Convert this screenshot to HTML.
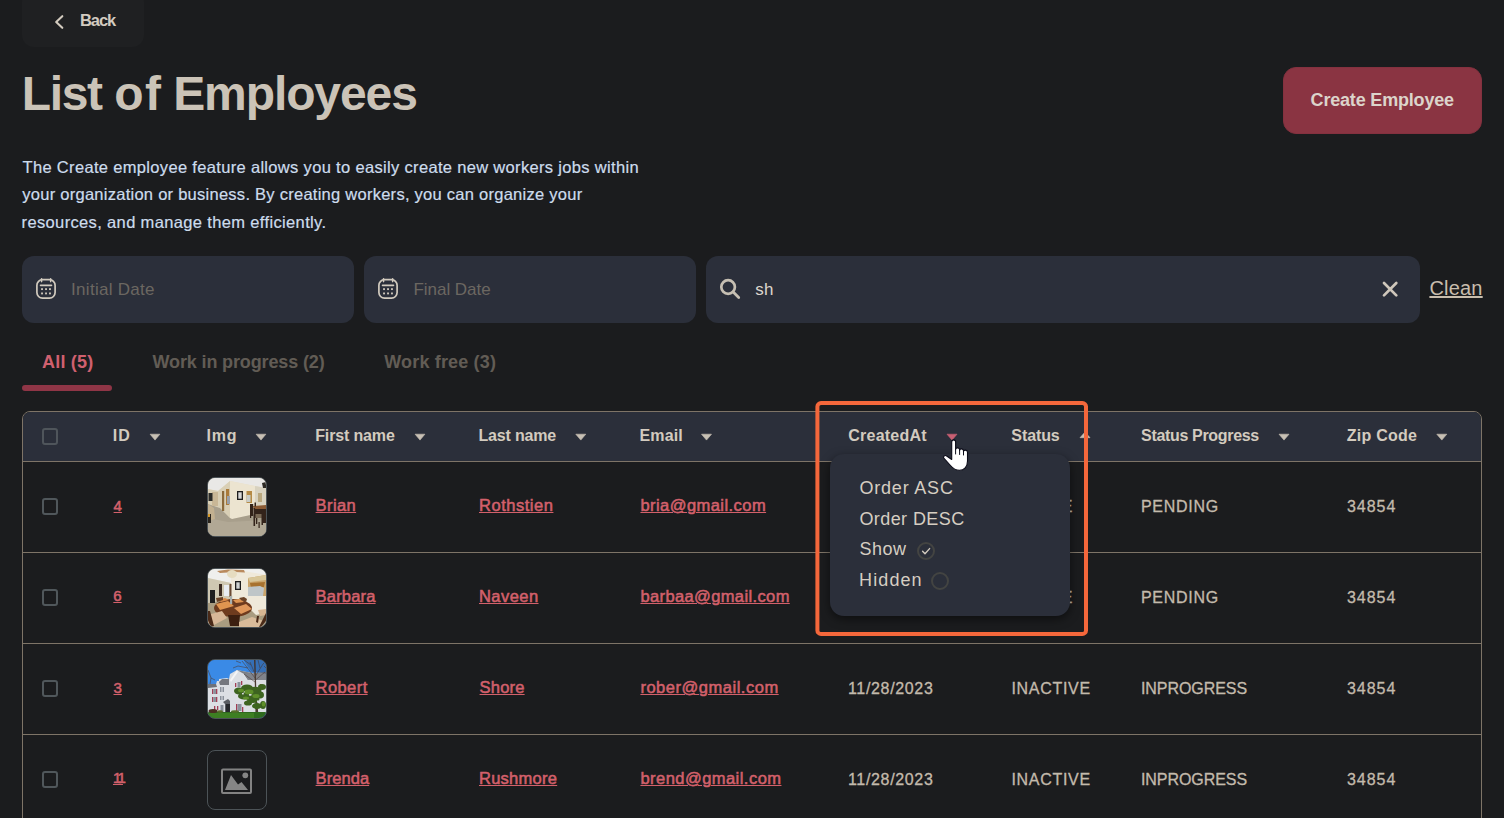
<!DOCTYPE html>
<html lang="en">
<head>
<meta charset="utf-8">
<title>List of Employees</title>
<style>
*{box-sizing:border-box;margin:0;padding:0}
html,body{width:1504px;height:818px;overflow:hidden;background:#1b1c1e}
body{position:relative;font-family:"Liberation Sans",sans-serif;color:#d3cbbf}
.a,.t,svg.a{position:absolute}
.t{white-space:nowrap;line-height:1}
.inp{top:256px;height:67px;border-radius:12px;background:#2b2f3a}
.hline{left:23px;width:1458px;height:1px;background:#7e7467}
.cb{left:42px;width:16px;height:17px;border:2px solid #50575b;border-radius:3px}
.pic{left:207px;width:60px;height:60px;border-radius:8px;border:1px solid #4c5357;overflow:hidden;background:#1b1c1e}
.rad{width:18px;height:18px;border-radius:50%;border:2px solid #434442}
</style>
</head>
<body>

<div class="a" style="left:22px;top:-10px;width:122px;height:57px;border-radius:12px;background:#1f2022"></div>
<svg class="a" style="left:50px;top:10px" width="20" height="24" viewBox="50 10 20 24"><path d="M62.3 16.2 L56.2 22 L62.3 27.8" fill="none" stroke="#d3cbbf" stroke-width="2.1" stroke-linecap="round" stroke-linejoin="round"/></svg>
<div class="a" style="left:1283px;top:67px;width:199px;height:67px;border-radius:13px;background:#8a3442;border:1px solid #84313f"></div>
<div class="a inp" style="left:22px;width:332px"></div>
<div class="a inp" style="left:364px;width:332px"></div>
<div class="a inp" style="left:706px;width:714px"></div>
<svg class="a" style="left:34.9px;top:276px" width="24" height="26" viewBox="0 0 24 26"><rect x="1.9" y="3.7" width="18.2" height="18.45" rx="5.6" fill="none" stroke="#d1cabe" stroke-width="1.7"/><path d="M6.55 2.9V5.6 M15.65 2.9V5.6" stroke="#d1cabe" stroke-width="1.6" stroke-linecap="round"/><path d="M5.6 9.3H16.4" stroke="#d1cabe" stroke-width="1.8" stroke-linecap="round"/><g fill="#d1cabe"><rect x="6.1" y="12.2" width="1.85" height="1.85"/><rect x="10.1" y="12.2" width="1.85" height="1.85"/><rect x="14.05" y="12.2" width="1.85" height="1.85"/><rect x="6.1" y="16.5" width="1.85" height="1.85"/><rect x="10.1" y="16.5" width="1.85" height="1.85"/><rect x="14.05" y="16.5" width="1.85" height="1.85"/></g></svg>
<svg class="a" style="left:377px;top:276px" width="24" height="26" viewBox="0 0 24 26"><rect x="1.9" y="3.7" width="18.2" height="18.45" rx="5.6" fill="none" stroke="#d1cabe" stroke-width="1.7"/><path d="M6.55 2.9V5.6 M15.65 2.9V5.6" stroke="#d1cabe" stroke-width="1.6" stroke-linecap="round"/><path d="M5.6 9.3H16.4" stroke="#d1cabe" stroke-width="1.8" stroke-linecap="round"/><g fill="#d1cabe"><rect x="6.1" y="12.2" width="1.85" height="1.85"/><rect x="10.1" y="12.2" width="1.85" height="1.85"/><rect x="14.05" y="12.2" width="1.85" height="1.85"/><rect x="6.1" y="16.5" width="1.85" height="1.85"/><rect x="10.1" y="16.5" width="1.85" height="1.85"/><rect x="14.05" y="16.5" width="1.85" height="1.85"/></g></svg>
<svg class="a" style="left:716px;top:275px" width="28" height="28" viewBox="716 275 28 28"><circle cx="728.1" cy="287" r="6.8" fill="none" stroke="#c6bfb2" stroke-width="2.7"/><path d="M733.2 292.1 L738.7 297.5" stroke="#c6bfb2" stroke-width="2.8" stroke-linecap="round"/></svg>
<svg class="a" style="left:1380px;top:279px" width="20" height="20" viewBox="1380 279 20 20"><path d="M1384 283 L1396.3 295.4 M1396.3 283 L1384 295.4" stroke="#cfc7bb" stroke-width="2.7" stroke-linecap="round"/></svg>
<div class="a" style="left:22px;top:385px;width:90px;height:6px;border-radius:3px;background:#8f3546"></div>
<div class="a" style="left:22px;top:411px;width:1460px;height:430px;border:1px solid #7e7467;border-radius:8px 8px 0 0"></div>
<div class="a" style="left:23px;top:412px;width:1458px;height:49px;background:#2b2f3a;border-radius:7px 7px 0 0"></div>
<div class="a hline" style="top:461px"></div>
<div class="a hline" style="top:552px"></div>
<div class="a hline" style="top:643px"></div>
<div class="a hline" style="top:734px"></div>
<svg class="a" style="left:0;top:428px" width="1504" height="16" viewBox="0 428 1504 16">
<polygon points="150.1,434.2 159.9,434.2 155.0,440.1" fill="#c7c0b4" stroke="#c7c0b4" stroke-width="0.6" stroke-linejoin="round"/>
<polygon points="256.1,434.2 265.9,434.2 261.0,440.1" fill="#c7c0b4" stroke="#c7c0b4" stroke-width="0.6" stroke-linejoin="round"/>
<polygon points="415.1,434.2 424.9,434.2 420.0,440.1" fill="#c7c0b4" stroke="#c7c0b4" stroke-width="0.6" stroke-linejoin="round"/>
<polygon points="575.8,434.2 585.8,434.2 580.8,440.1" fill="#c7c0b4" stroke="#c7c0b4" stroke-width="0.6" stroke-linejoin="round"/>
<polygon points="701.5,434.2 711.5,434.2 706.5,440.1" fill="#c7c0b4" stroke="#c7c0b4" stroke-width="0.6" stroke-linejoin="round"/>
<polygon points="1279.0,434.2 1289.0,434.2 1284.0,440.1" fill="#c7c0b4" stroke="#c7c0b4" stroke-width="0.6" stroke-linejoin="round"/>
<polygon points="1436.8,434.2 1446.8,434.2 1441.8,440.1" fill="#c7c0b4" stroke="#c7c0b4" stroke-width="0.6" stroke-linejoin="round"/>
<polygon points="947.0,434.2 957.0,434.2 952.0,440.1" fill="#c96073" stroke="#c96073" stroke-width="0.6" stroke-linejoin="round"/>
<polygon points="1080.0,437.7 1090.0,437.7 1085.0,432.1" fill="#c7c0b4" stroke="#c7c0b4" stroke-width="0.6" stroke-linejoin="round"/>
</svg>
<div class="a cb" style="top:428px;border-color:#4f555b"></div>
<div class="a cb" style="top:498px"></div>
<div class="a cb" style="top:589px"></div>
<div class="a cb" style="top:680px"></div>
<div class="a cb" style="top:771px"></div>
<div class="a pic" style="top:477px"><svg width="58" height="58" viewBox="0 0 58 58">
<rect width="58" height="58" fill="#e6dfcc"/>
<polygon points="0,0 58,0 58,10 47,8 22,3 10,13 0,11" fill="#e9e8e6"/>
<polygon points="0,11 10,13 22,3 22,40 12,30 0,26" fill="#d9cfb5"/>
<polygon points="22,3 47,8 47,36 24,41 22,40" fill="#ece4d0"/>
<polygon points="47,8 58,10 58,30 47,30" fill="#d8d2c0"/>
<polygon points="0,26 12,30 22,40 24,41 47,36 58,34 58,58 0,58" fill="#a89f8c"/>
<polygon points="0,40 20,44 58,42 58,58 0,58" fill="#b1a895"/>
<rect x="4" y="14" width="6" height="14" fill="#c9b796"/>
<rect x="0.5" y="15" width="4" height="8" fill="#2a2a28"/>
<rect x="14" y="13" width="2.2" height="20" fill="#8a6a3c"/>
<rect x="18" y="11" width="3.2" height="16" fill="#a97a3a"/>
<rect x="19" y="18" width="3" height="8" fill="#9aa0a8"/>
<rect x="29" y="13" width="6" height="9" fill="#1e1e1e"/><rect x="30.3" y="14.3" width="3.4" height="6.4" fill="#d8d8d8"/>
<rect x="38.5" y="13" width="5.5" height="12" fill="#b58a45"/><rect x="38.5" y="17" width="4" height="7" fill="#c8ccc8"/>
<rect x="50" y="15" width="4" height="9" fill="#b9a77e"/>
<polygon points="54,5 58,4 58,10 55,10" fill="#2d2924"/>
<polygon points="45,28 58,27 58,31 46,32" fill="#8a5a34"/>
<g fill="#33231a"><rect x="42" y="26" width="3.2" height="12"/><rect x="42" y="26" width="1.2" height="14"/><rect x="45.5" y="30" width="1.6" height="18"/><rect x="47" y="31" width="7" height="9"/><rect x="48" y="40" width="1.3" height="6"/><rect x="53.5" y="31" width="1.5" height="16"/><rect x="55" y="31" width="3" height="14"/><rect x="50.5" y="44" width="1.2" height="6"/><rect x="46.5" y="24.5" width="1.5" height="4"/></g>
<polygon points="47.5,36 53.5,36 53.5,40 47.5,40" fill="#7a6a56"/>
<polygon points="0,26 6,30 7,41 0,43" fill="#c2b090"/>
<rect x="0" y="36" width="3" height="9" fill="#2a241c"/><rect x="0" y="36" width="2" height="3" fill="#d69a2a"/>
</svg></div>
<div class="a pic" style="top:568px"><svg width="58" height="58" viewBox="0 0 58 58">
<rect width="58" height="58" fill="#ece6d6"/>
<polygon points="0,0 58,0 58,6 36,4 23,14 0,9" fill="#efefed"/>
<polygon points="0,9 23,14 23,30 0,34" fill="#cfc8b2"/>
<polygon points="23,4 36,2 58,6 58,44 48,46 36,34 23,30" fill="#efe9da"/>
<polygon points="0,34 23,30 36,34 48,46 58,44 58,58 0,58" fill="#a99c80"/>
<polygon points="9,2 20,0.5 36,1 37,3.5 27,3 12,4" fill="#b98a5e"/>
<ellipse cx="24" cy="5" rx="5" ry="4" fill="#e6dcc0"/>
<rect x="11" y="15" width="3" height="12" fill="#3b2b22"/>
<rect x="16" y="16" width="5" height="11" fill="#e9edf2"/>
<rect x="21.5" y="15" width="2" height="13" fill="#6b4a34"/>
<rect x="2" y="21" width="5" height="13" fill="#1e1e1e"/>
<rect x="27" y="12" width="6" height="9" fill="#1d1d1d"/><rect x="28.3" y="13.3" width="3.4" height="6.4" fill="#cfd2d2"/>
<polygon points="40,9 58,6 58,27 40,27" fill="#caa56c"/>
<polygon points="40,9 58,6 58,11 42,13" fill="#d8c79a"/>
<polygon points="42,14 57,13 56,18 43,19" fill="#a8722f"/>
<polygon points="40,18 52,17 56,19 55,27 40,27" fill="#bfc6c8"/>
<ellipse cx="25" cy="39" rx="19" ry="9" fill="#6e3b1e"/>
<polygon points="8,35 20,32 26,37 12,41" fill="#e09550"/>
<polygon points="25,31 32,30 36,33 28,34" fill="#df9552"/>
<polygon points="26,39 38,35 44,40 33,45" fill="#e0975a"/>
<polygon points="10,31 17,29 21,31 13,33" fill="#d98a48"/>
<rect x="22" y="27" width="2.2" height="8" fill="#a9b0ae"/>
<polygon points="20,46 32,46 31,57 22,57" fill="#3c1f10"/>
<polygon points="0,46 14,42 19,49 6,56 0,54" fill="#d8b898"/>
<polygon points="0,42 2,42 6,57 3,58 0,52" fill="#4a2a18"/>
<polygon points="31,53 44,48 56,52 52,58 31,58" fill="#d9bb9a"/>
<polygon points="50,41 58,40 58,46 52,47" fill="#d6b592"/>
<polygon points="49,47 51,47 50,54 48,53" fill="#4a2a18"/><polygon points="55,50 58,44 58,52 53,58 51,58" fill="#4a2a18"/>
<polygon points="31,29 36,28 39,30 38,33 33,31" fill="#6a4226"/>
<polygon points="8,29 15,28 15,31 9,33" fill="#6a4226"/>
</svg></div>
<div class="a pic" style="top:659px"><svg width="58" height="58" viewBox="0 0 58 58">
<rect width="58" height="58" fill="#3f86dd"/>
<polygon points="0,0 58,0 58,12 40,10 20,22 0,22" fill="#3a8ae6"/>
<polygon points="0,24 8,24 9,21 11,21 11,19 19,18 21,19 22,14 29,10 44,13 58,16 58,53 0,53" fill="#dcdfe4"/>
<polygon points="29,10 36,14 40,20 44,19 44,13" fill="#7d8087"/>
<polygon points="36,14 58,12 58,20 40,20" fill="#80838a"/>
<polygon points="11,22 14,19 21,19 21,25 12,25" fill="#74777e"/>
<polygon points="0,24 8,24 9,27 0,28" fill="#6e7178"/>
<polygon points="22,20 29,10 30,12 23,22" fill="#f4f5f7"/>
<g fill="#a23e55"><rect x="4" y="29" width="1.3" height="5"/><rect x="8" y="29" width="1.3" height="5"/><rect x="4" y="37" width="1.3" height="5"/><rect x="8" y="37" width="1.3" height="5"/><rect x="6" y="46" width="1.3" height="4"/><rect x="9" y="46" width="1.3" height="4"/><rect x="27" y="23" width="1.3" height="4"/><rect x="33" y="21" width="1.3" height="4"/><rect x="28" y="44" width="1.3" height="7"/><rect x="34" y="47" width="1.3" height="5"/><rect x="52" y="24" width="1.3" height="5"/></g>
<g fill="#8b929c"><rect x="5.3" y="29" width="2.7" height="5"/><rect x="5.3" y="37" width="2.7" height="5"/><rect x="12" y="27" width="1.5" height="5"/><rect x="14.5" y="27" width="1.5" height="5"/><rect x="12" y="36" width="1.5" height="4"/><rect x="14.5" y="36" width="1.5" height="4"/><rect x="29.5" y="22" width="3" height="5"/><rect x="29.5" y="44" width="4" height="7"/><rect x="12.5" y="45" width="3" height="7"/></g>
<polygon points="15,42 20,39 22,41 22,52 17,52 17,44" fill="#5a5d63"/>
<rect x="18" y="44" width="4" height="8" fill="#26282c"/>
<path d="M46 0 L47.5 0 L48.3 30 L50.5 56 L47.5 56 L47 30 Z" fill="#4a3a30"/>
<g stroke="#4c3f3c" stroke-width="0.7" fill="none" opacity=".85"><path d="M47 18 L38 6 L34 1 M47 14 L42 2 M47.5 16 L55 4 L58 1 M47.5 20 L57 12 M40 8 L30 6 L25 8 M43 5 L36 0 M52 8 L50 0 M47 22 L36 14 M56 6 L58 8 M33 3 L28 1 M0 10 L3 18 L2 24 M3 18 L7 20"/></g>
<g fill="#3d6420"><ellipse cx="31" cy="31" rx="5" ry="3.4"/><ellipse cx="39" cy="28" rx="6" ry="3.6"/><ellipse cx="47" cy="31" rx="6.5" ry="4.2"/><ellipse cx="36" cy="36" rx="6" ry="3.6"/><ellipse cx="45" cy="39" rx="6.5" ry="4"/><ellipse cx="52" cy="35" rx="4" ry="3.4"/><ellipse cx="40" cy="43" rx="4" ry="2.6"/><ellipse cx="55" cy="45" rx="3" ry="4"/><ellipse cx="49" cy="46" rx="5" ry="3"/><ellipse cx="54" cy="27" rx="4" ry="3"/></g>
<g fill="#5f8f2a"><ellipse cx="33" cy="30.5" rx="3" ry="1.8"/><ellipse cx="41" cy="32" rx="4.5" ry="2.4"/><ellipse cx="48" cy="36" rx="3.6" ry="2"/><ellipse cx="38" cy="38" rx="3" ry="1.6"/><ellipse cx="55.5" cy="44" rx="1.8" ry="2.6"/></g>
<g fill="#d7dadf"><rect x="41" y="34" width="2.2" height="1.6"/><rect x="34" y="33" width="1.8" height="1.4"/><rect x="49" y="40.5" width="2" height="1.5"/></g>
<polygon points="36,0 58,0 58,14 50,12 44,12 40,7" fill="#2c2a3a" opacity=".28"/>
<polygon points="0,52 58,52 58,58 0,58" fill="#2f6a1e"/>
<polygon points="0,53 46,53 46,58 0,58" fill="#3d7f22"/>
<ellipse cx="5" cy="51" rx="4.5" ry="2" fill="#4a2f22"/><ellipse cx="12" cy="51.5" rx="3" ry="1.3" fill="#5a6a2a"/><ellipse cx="27" cy="51.5" rx="4" ry="1.3" fill="#55702a"/>
</svg></div>
<div class="a pic" style="top:750px"><svg width="58" height="58" viewBox="0 0 58 58">
<rect x="14" y="18.5" width="29" height="23.5" rx="1" fill="none" stroke="#838383" stroke-width="2"/>
<polygon points="17,39 23,24 30,33.5 33.5,31 40,39" fill="#858585"/>
<circle cx="37.3" cy="24.3" r="2.9" fill="#858585"/>
</svg></div>

<div class="t" id="t0" style="left:79.90px;top:12.00px;font-size:16.5px;font-weight:700;color:#d3cbc0;letter-spacing:-1.015px;">Back</div>
<div class="t" id="t1" style="left:21.80px;top:70.00px;font-size:48px;font-weight:700;color:#cbc3b7;letter-spacing:-1.365px;">List</div>
<div class="t" id="t2" style="left:114.30px;top:70.00px;font-size:48px;font-weight:700;color:#cbc3b7;letter-spacing:1.278px;">of</div>
<div class="t" id="t3" style="left:173.20px;top:70.00px;font-size:48px;font-weight:700;color:#cbc3b7;letter-spacing:-1.099px;">Employees</div>
<div class="t" id="t4" style="left:22.53px;top:159.00px;font-size:16.5px;font-weight:400;color:#cddced;letter-spacing:0.327px;-webkit-text-stroke:0.2px #cddced;">The Create employee feature allows you to easily create new workers jobs within</div>
<div class="t" id="t5" style="left:22.30px;top:186.00px;font-size:16.5px;font-weight:400;color:#cddced;letter-spacing:0.260px;-webkit-text-stroke:0.2px #cddced;">your organization or business. By creating workers, you can organize your</div>
<div class="t" id="t6" style="left:21.60px;top:214.00px;font-size:16.5px;font-weight:400;color:#cddced;letter-spacing:0.353px;-webkit-text-stroke:0.2px #cddced;">resources, and manage them efficiently.</div>
<div class="t" id="t7" style="left:1310.60px;top:91.00px;font-size:18px;font-weight:700;color:#dcd4cb;letter-spacing:-0.187px;">Create Employee</div>
<div class="t" id="t8" style="left:71.11px;top:281.00px;font-size:17px;font-weight:400;color:#6b6761;letter-spacing:0.286px;">Initial Date</div>
<div class="t" id="t9" style="left:413.51px;top:281.00px;font-size:17px;font-weight:400;color:#6b6761;letter-spacing:-0.034px;">Final Date</div>
<div class="t" id="t10" style="left:755.16px;top:281.00px;font-size:17px;font-weight:400;color:#ddd7cd;letter-spacing:0.338px;">sh</div>
<div class="t" id="t11" style="left:1429.40px;top:278.00px;font-size:20px;font-weight:400;color:#c8bdad;letter-spacing:0.206px;text-decoration:underline;text-decoration-thickness:2px;text-underline-offset:1px;">Clean</div>
<div class="t" id="t12" style="left:42.05px;top:353.00px;font-size:18px;font-weight:700;color:#d0606f;letter-spacing:0.183px;">All (5)</div>
<div class="t" id="t13" style="left:152.50px;top:353.00px;font-size:18px;font-weight:700;color:#625c55;letter-spacing:-0.132px;">Work in progress (2)</div>
<div class="t" id="t14" style="left:384.30px;top:353.00px;font-size:18px;font-weight:700;color:#625c55;letter-spacing:0.158px;">Work free (3)</div>
<div class="t" id="t15" style="left:112.75px;top:428.00px;font-size:16px;font-weight:700;color:#d3cbbf;letter-spacing:1.097px;">ID</div>
<div class="t" id="t16" style="left:206.50px;top:428.00px;font-size:16px;font-weight:700;color:#d3cbbf;letter-spacing:0.750px;">Img</div>
<div class="t" id="t17" style="left:315.25px;top:428.00px;font-size:16px;font-weight:700;color:#d3cbbf;letter-spacing:-0.151px;">First name</div>
<div class="t" id="t18" style="left:478.50px;top:428.00px;font-size:16px;font-weight:700;color:#d3cbbf;letter-spacing:-0.175px;">Last name</div>
<div class="t" id="t19" style="left:639.50px;top:428.00px;font-size:16px;font-weight:700;color:#d3cbbf;letter-spacing:0.151px;">Email</div>
<div class="t" id="t20" style="left:848.27px;top:428.00px;font-size:16px;font-weight:700;color:#d3cbbf;letter-spacing:0.233px;">CreatedAt</div>
<div class="t" id="t21" style="left:1011.35px;top:428.00px;font-size:16px;font-weight:700;color:#d3cbbf;letter-spacing:-0.109px;">Status</div>
<div class="t" id="t22" style="left:1141.05px;top:428.00px;font-size:16px;font-weight:700;color:#d3cbbf;letter-spacing:-0.325px;">Status Progress</div>
<div class="t" id="t23" style="left:1346.81px;top:428.00px;font-size:16px;font-weight:700;color:#d3cbbf;letter-spacing:0.227px;">Zip Code</div>
<div class="t" id="t24" style="left:113.60px;top:498.00px;font-size:15px;font-weight:400;color:#d3606b;letter-spacing:0.000px;text-decoration:underline;text-decoration-thickness:1.25px;text-underline-offset:1.2px;-webkit-text-stroke:0.55px #d3606b;">4</div>
<div class="t" id="t25" style="left:315.60px;top:497.00px;font-size:16.5px;font-weight:400;color:#d3606b;letter-spacing:0.400px;text-decoration:underline;text-decoration-thickness:1.25px;text-underline-offset:1.2px;-webkit-text-stroke:0.55px #d3606b;">Brian</div>
<div class="t" id="t26" style="left:479.00px;top:497.00px;font-size:16.5px;font-weight:400;color:#d3606b;letter-spacing:0.525px;text-decoration:underline;text-decoration-thickness:1.25px;text-underline-offset:1.2px;-webkit-text-stroke:0.55px #d3606b;">Rothstien</div>
<div class="t" id="t27" style="left:640.43px;top:497.00px;font-size:16.5px;font-weight:400;color:#d3606b;letter-spacing:0.444px;text-decoration:underline;text-decoration-thickness:1.25px;text-underline-offset:1.2px;-webkit-text-stroke:0.55px #d3606b;">bria@gmail.com</div>
<div class="t" id="t28" style="left:848.00px;top:499.00px;font-size:16px;font-weight:400;color:#c3baac;letter-spacing:0.660px;-webkit-text-stroke:0.3px #c3baac;">11/28/2023</div>
<div class="t" id="t29" style="left:1012.50px;top:499.00px;font-size:16px;font-weight:400;color:#c3baac;letter-spacing:0.441px;-webkit-text-stroke:0.3px #c3baac;">ACTIVE</div>
<div class="t" id="t30" style="left:1141.00px;top:499.00px;font-size:16px;font-weight:400;color:#c3baac;letter-spacing:0.700px;-webkit-text-stroke:0.3px #c3baac;">PENDING</div>
<div class="t" id="t31" style="left:1346.91px;top:499.00px;font-size:16px;font-weight:400;color:#c3baac;letter-spacing:0.984px;-webkit-text-stroke:0.3px #c3baac;">34854</div>
<div class="t" id="t32" style="left:113.33px;top:588.00px;font-size:15px;font-weight:400;color:#d3606b;letter-spacing:0.000px;text-decoration:underline;text-decoration-thickness:1.25px;text-underline-offset:1.2px;-webkit-text-stroke:0.55px #d3606b;">6</div>
<div class="t" id="t33" style="left:315.60px;top:588.00px;font-size:16.5px;font-weight:400;color:#d3606b;letter-spacing:0.183px;text-decoration:underline;text-decoration-thickness:1.25px;text-underline-offset:1.2px;-webkit-text-stroke:0.55px #d3606b;">Barbara</div>
<div class="t" id="t34" style="left:479.00px;top:588.00px;font-size:16.5px;font-weight:400;color:#d3606b;letter-spacing:0.441px;text-decoration:underline;text-decoration-thickness:1.25px;text-underline-offset:1.2px;-webkit-text-stroke:0.55px #d3606b;">Naveen</div>
<div class="t" id="t35" style="left:640.43px;top:588.00px;font-size:16.5px;font-weight:400;color:#d3606b;letter-spacing:0.377px;text-decoration:underline;text-decoration-thickness:1.25px;text-underline-offset:1.2px;-webkit-text-stroke:0.55px #d3606b;">barbaa@gmail.com</div>
<div class="t" id="t36" style="left:848.00px;top:590.00px;font-size:16px;font-weight:400;color:#c3baac;letter-spacing:0.660px;-webkit-text-stroke:0.3px #c3baac;">11/28/2023</div>
<div class="t" id="t37" style="left:1012.50px;top:590.00px;font-size:16px;font-weight:400;color:#c3baac;letter-spacing:0.441px;-webkit-text-stroke:0.3px #c3baac;">ACTIVE</div>
<div class="t" id="t38" style="left:1141.00px;top:590.00px;font-size:16px;font-weight:400;color:#c3baac;letter-spacing:0.700px;-webkit-text-stroke:0.3px #c3baac;">PENDING</div>
<div class="t" id="t39" style="left:1346.91px;top:590.00px;font-size:16px;font-weight:400;color:#c3baac;letter-spacing:0.984px;-webkit-text-stroke:0.3px #c3baac;">34854</div>
<div class="t" id="t40" style="left:113.50px;top:680.00px;font-size:15px;font-weight:400;color:#d3606b;letter-spacing:0.000px;text-decoration:underline;text-decoration-thickness:1.25px;text-underline-offset:1.2px;-webkit-text-stroke:0.55px #d3606b;">3</div>
<div class="t" id="t41" style="left:315.60px;top:679.00px;font-size:16.5px;font-weight:400;color:#d3606b;letter-spacing:0.420px;text-decoration:underline;text-decoration-thickness:1.25px;text-underline-offset:1.2px;-webkit-text-stroke:0.55px #d3606b;">Robert</div>
<div class="t" id="t42" style="left:479.59px;top:679.00px;font-size:16.5px;font-weight:400;color:#d3606b;letter-spacing:0.200px;text-decoration:underline;text-decoration-thickness:1.25px;text-underline-offset:1.2px;-webkit-text-stroke:0.55px #d3606b;">Shore</div>
<div class="t" id="t43" style="left:640.40px;top:679.00px;font-size:16.5px;font-weight:400;color:#d3606b;letter-spacing:0.522px;text-decoration:underline;text-decoration-thickness:1.25px;text-underline-offset:1.2px;-webkit-text-stroke:0.55px #d3606b;">rober@gmail.com</div>
<div class="t" id="t44" style="left:848.00px;top:681.00px;font-size:16px;font-weight:400;color:#c3baac;letter-spacing:0.660px;-webkit-text-stroke:0.3px #c3baac;">11/28/2023</div>
<div class="t" id="t45" style="left:1011.43px;top:681.00px;font-size:16px;font-weight:400;color:#c3baac;letter-spacing:0.696px;-webkit-text-stroke:0.3px #c3baac;">INACTIVE</div>
<div class="t" id="t46" style="left:1140.93px;top:681.00px;font-size:16px;font-weight:400;color:#c3baac;letter-spacing:-0.060px;-webkit-text-stroke:0.3px #c3baac;">INPROGRESS</div>
<div class="t" id="t47" style="left:1346.91px;top:681.00px;font-size:16px;font-weight:400;color:#c3baac;letter-spacing:0.984px;-webkit-text-stroke:0.3px #c3baac;">34854</div>
<div class="t" id="t48" style="left:112.97px;top:770.00px;font-size:15px;font-weight:400;color:#d3606b;letter-spacing:-2.800px;text-decoration:underline;text-decoration-thickness:1.25px;text-underline-offset:1.2px;-webkit-text-stroke:0.55px #d3606b;">11</div>
<div class="t" id="t49" style="left:315.60px;top:770.00px;font-size:16.5px;font-weight:400;color:#d3606b;letter-spacing:0.054px;text-decoration:underline;text-decoration-thickness:1.25px;text-underline-offset:1.2px;-webkit-text-stroke:0.55px #d3606b;">Brenda</div>
<div class="t" id="t50" style="left:479.00px;top:770.00px;font-size:16.5px;font-weight:400;color:#d3606b;letter-spacing:0.257px;text-decoration:underline;text-decoration-thickness:1.25px;text-underline-offset:1.2px;-webkit-text-stroke:0.55px #d3606b;">Rushmore</div>
<div class="t" id="t51" style="left:640.43px;top:770.00px;font-size:16.5px;font-weight:400;color:#d3606b;letter-spacing:0.461px;text-decoration:underline;text-decoration-thickness:1.25px;text-underline-offset:1.2px;-webkit-text-stroke:0.55px #d3606b;">brend@gmail.com</div>
<div class="t" id="t52" style="left:848.00px;top:772.00px;font-size:16px;font-weight:400;color:#c3baac;letter-spacing:0.660px;-webkit-text-stroke:0.3px #c3baac;">11/28/2023</div>
<div class="t" id="t53" style="left:1011.43px;top:772.00px;font-size:16px;font-weight:400;color:#c3baac;letter-spacing:0.696px;-webkit-text-stroke:0.3px #c3baac;">INACTIVE</div>
<div class="t" id="t54" style="left:1140.93px;top:772.00px;font-size:16px;font-weight:400;color:#c3baac;letter-spacing:-0.060px;-webkit-text-stroke:0.3px #c3baac;">INPROGRESS</div>
<div class="t" id="t55" style="left:1346.91px;top:772.00px;font-size:16px;font-weight:400;color:#c3baac;letter-spacing:0.984px;-webkit-text-stroke:0.3px #c3baac;">34854</div>
<div class="a" style="left:830px;top:454px;width:240px;height:162px;border-radius:14px;background:#2b2f3a;box-shadow:0 3px 10px rgba(0,0,0,.5)"></div>
<div class="t" id="t56" style="left:859.40px;top:479.00px;font-size:18px;font-weight:400;color:#d6cec2;letter-spacing:0.812px;">Order ASC</div>
<div class="t" id="t57" style="left:859.40px;top:510.00px;font-size:18px;font-weight:400;color:#d6cec2;letter-spacing:0.422px;">Order DESC</div>
<div class="t" id="t58" style="left:859.40px;top:540.00px;font-size:18px;font-weight:400;color:#d6cec2;letter-spacing:0.533px;">Show</div>
<div class="t" id="t59" style="left:859.11px;top:571.00px;font-size:18px;font-weight:400;color:#d6cec2;letter-spacing:1.097px;">Hidden</div>
<div class="a rad" style="left:917px;top:541.5px"></div>
<svg class="a" style="left:917px;top:541.5px" width="18" height="18" viewBox="0 0 18 18"><path d="M5.6 9.3 L8 11.7 L12.6 6.6" fill="none" stroke="#d3cbbf" stroke-width="1.4" stroke-linecap="round" stroke-linejoin="round"/></svg>
<div class="a rad" style="left:931px;top:571.5px"></div>
<svg class="a" style="left:810px;top:396px" width="284" height="246" viewBox="810 396 284 246"><rect x="817.4" y="403" width="268.6" height="231" rx="3.6" fill="none" stroke="#f4673b" stroke-width="4"/></svg>
<svg class="a" style="left:940px;top:436px" width="32" height="38" viewBox="940 436 32 38"><path d="M951.7 459.5 L951.7 442 C951.7 439.2 955.6 439.2 955.6 442 L955.6 449.5 C955.6 447.3 959.6 447.3 959.6 449.8 L959.6 450.5 C959.6 448.2 963.5 448.4 963.5 450.8 L963.5 451.8 C963.5 449.4 967.5 449.6 967.5 452.3 L967.5 461 C967.5 467 964 470.3 959.5 470.3 C955 470.3 953 468.5 950.5 465.5 L943.8 458.2 C942.8 456.8 944.5 454.8 946.3 455.8 L951.7 459.5 Z" fill="#fff" stroke="#0b0b18" stroke-width="1.1" stroke-linejoin="round"/><path d="M955.6 449.5V454 M959.6 450.5V454.5 M963.5 451.8V455" stroke="#0b0b18" stroke-width="1" stroke-linecap="round"/></svg>
</body>
</html>
